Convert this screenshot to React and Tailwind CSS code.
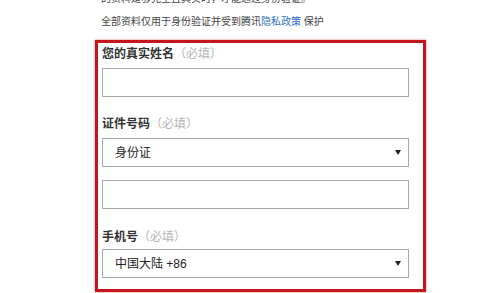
import React from 'react';

const Arrow = () => (
    <svg width="6" height="5" viewBox="0 0 6 5" className="shrink-0">
        <path d="M0 0 L6 0 L3 5 Z" fill="#222" />
    </svg>
);

const Field = ({ label, className = '' }) => (
    <div className={"text-[12px] leading-[16px] font-semibold text-[#333] " + className}>
        {label}
        <span className="font-normal text-[#b5b5b5]">（必填）</span>
    </div>
);

const TextBox = ({ className = '' }) => (
    <div className={"w-[307px] h-[29px] border border-[#a8a8a8] bg-white " + className}></div>
);

const SelectBox = ({ value, className = '' }) => (
    <div className={"w-[307px] h-[29px] border border-[#a8a8a8] bg-white flex items-center justify-between pl-[12px] pr-[7px] " + className}>
        <span className="text-[12px] text-[#222]">{value}</span>
        <Arrow />
    </div>
);

const App = () => {
    return (
        <div
            className="w-[500px] h-[293px] overflow-hidden bg-white text-[#333]"
            style={{ fontFamily: '"Liberation Sans", "Noto Sans CJK SC", sans-serif' }}
        >
            <div className="pl-[101px] text-[10px] leading-[14px] text-[#444]">
                <p className="-mt-[8px]">的资料是够完全且真实时，才能通过身份验证。</p>
                <p className="mt-[9px]">
                    全部资料仅用于身份验证并受到腾讯<span className="text-[#2f6fc6]">隐私政策</span> 保护
                </p>
            </div>

            <div className="ml-[95px] mt-[11px] w-[331px] h-[252px] border-[3px] border-[#c3161d] shadow-[0_0_2px_rgba(190,20,30,0.6)] pl-[4px] pt-[3px]">
                <Field label="您的真实姓名" />
                <TextBox className="mt-[6px]" />

                <Field label="证件号码" className="mt-[19px]" />
                <SelectBox value="身份证" className="mt-[6px]" />
                <TextBox className="mt-[13px]" />

                <Field label="手机号" className="mt-[20px]" />
                <SelectBox value="中国大陆 +86" className="mt-[4px]" />
            </div>
        </div>
    );
};

export default App;
